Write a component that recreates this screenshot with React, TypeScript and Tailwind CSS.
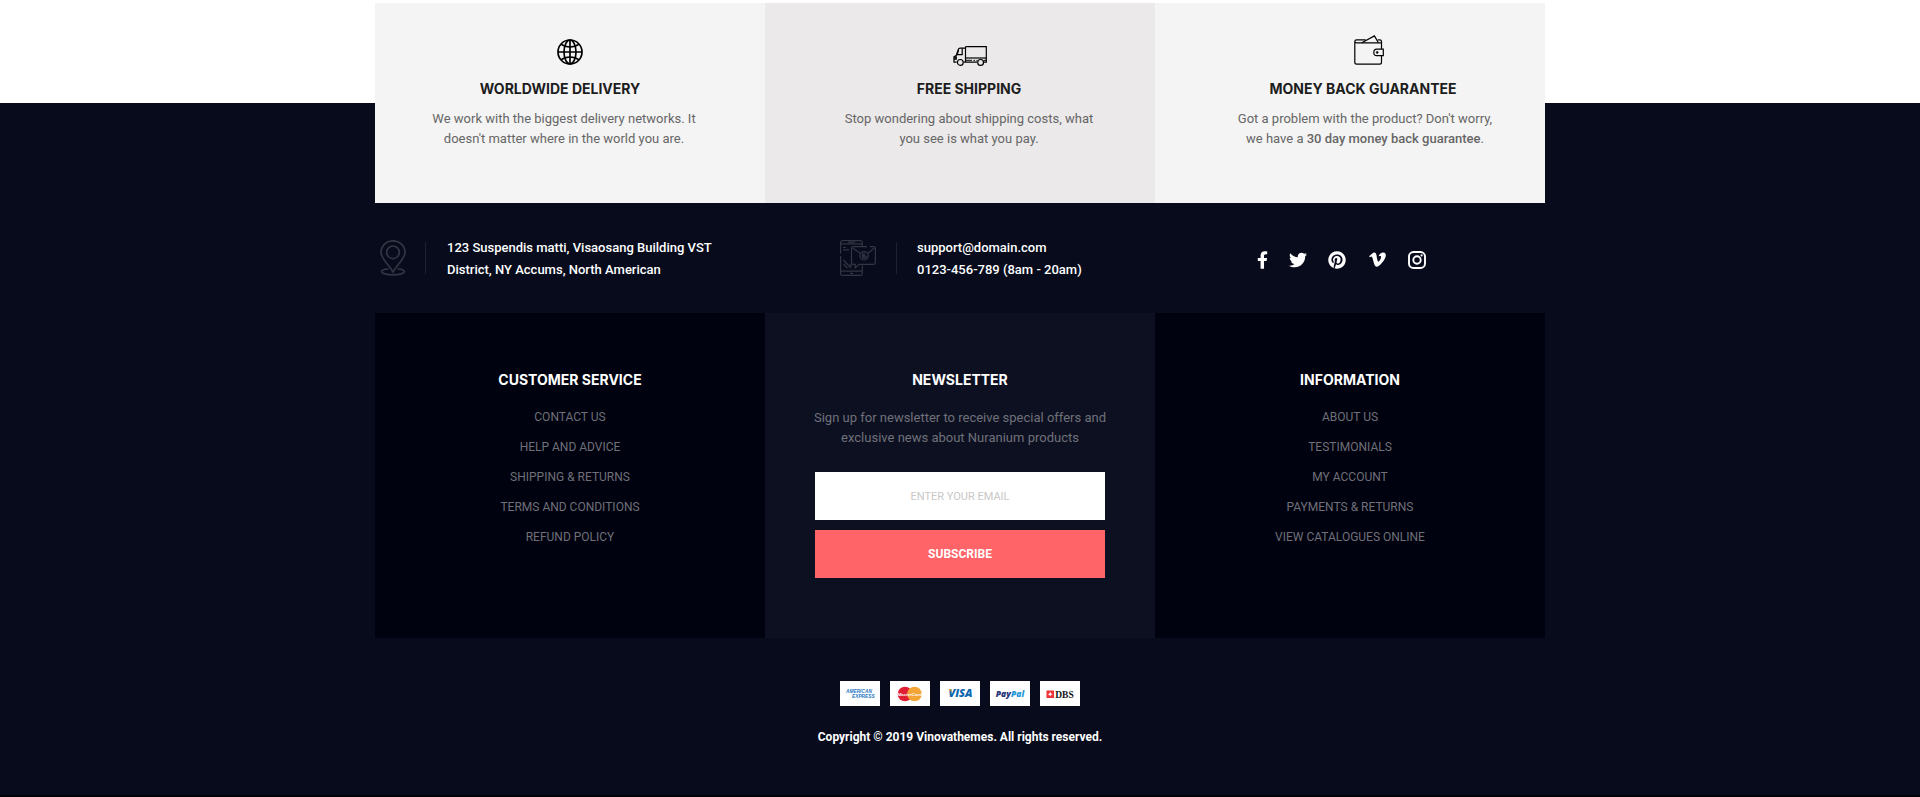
import React from "react";
import { FaFacebookF, FaTwitter, FaPinterest, FaVimeoV } from "react-icons/fa";

function GlobeIcon() {
  return (
    <svg width="26" height="26" viewBox="0 0 26 26" fill="none" stroke="#000" strokeWidth="1.7" aria-hidden="true">
      <circle cx="13" cy="13" r="12" />
      <ellipse cx="13" cy="13" rx="6" ry="12" />
      <path d="M13 1v24M1 13h24" />
      <path d="M4 5.2c2.6 2 5.6 2.8 9 2.8s6.400-.8 9-2.800M4 20.800c2.600-2 5.600-2.800 9-2.800s6.400.8 9 2.800" />
    </svg>
  );
}

function TruckIcon() {
  return (
    <svg width="34" height="20" viewBox="0 0 34 20" fill="none" stroke="#000" strokeWidth="1.2" aria-hidden="true">
      <path d="M12.500.7h20.800v15.500h-2.600M24 16.200H11M12.500.7v15.500" />
      <path d="M12.500 2.200H7.200c-1 0-1.700.4-2 1.400L3.400 9.300 1 10.800v5.400h2.600" />
      <path d="M9.200 2.200v6.500H4.200L5.600 4" />
      <path d="M12.500 12h20.800" />
      <path d="M.8 11h2.400v2H.8" strokeWidth="1.4" />
      <path d="M13 14.300h6M20.500 14.300h1.600M23.400 14.300h1.200M30.500 14.300h2.800" strokeWidth="1" />
      <circle cx="7.3" cy="16.4" r="2.9" />
      <circle cx="27.6" cy="16.4" r="2.9" />
    </svg>
  );
}

function WalletIcon() {
  return (
    <svg width="30" height="30" viewBox="0 0 30 30" fill="none" stroke="#000" strokeWidth="1.2" aria-hidden="true">
      <path d="M27.500 14V7.800H2.600C1.500 7.800.8 7 .8 6.300v21c0 1.100.7 1.900 1.900 1.900h22.900c1.200 0 1.900-.8 1.900-1.900V21" />
      <path d="M.8 6.600c0-1.100.8-1.700 1.900-1.700h9M23.800 4.900h1.800c1.200 0 1.900.6 1.900 1.700v1.200" />
      <path d="M7.800 7.800 20.400.9l4 6.900" />
      <path d="M29.300 14.200h-6.600a2.900 3.200 0 0 0 0 6.400h6.600z" />
      <circle cx="23.2" cy="17.4" r="1" fill="#000" strokeWidth=".6" />
    </svg>
  );
}

function PinIcon() {
  return (
    <svg width="26" height="36" viewBox="0 0 26 36" fill="none" stroke="#323542" strokeWidth="1.7" aria-hidden="true">
      <path d="M13 32C9.500 25.500 1 18.500 1 12.500a12 11.700 0 0 1 24 0c0 6-8.500 13-12 19.500z" />
      <circle cx="13" cy="12.300" r="6.300" />
      <path d="M8.300 28.800c-4 .4-6.700 1.400-6.700 2.700 0 1.900 5 3.300 11.400 3.300s11.400-1.400 11.400-3.300c0-1.300-2.700-2.300-6.700-2.700" />
    </svg>
  );
}

function PhoneMailIcon() {
  return (
    <svg width="36" height="36" viewBox="0 0 36 36" fill="none" stroke="#323542" strokeWidth="1.2" aria-hidden="true">
      <path d="M22.300 6V2.500c0-1.100-.7-1.900-1.800-1.900h-18C1.400.6.6 1.400.6 2.500v11.300M.6 16v17.500c0 1.100.8 1.900 1.900 1.900h18c1.100 0 1.800-.8 1.800-1.900V25.500" />
      <path d="M.6 3.800h21.700M.6 31.200h21.700M8 2.200h7M10 33.300h3M3 9.800h6M3 7.500h3M3.500 20l7.500 8M3.500 24l4 4M10 24l2 2" />
      <path d="M27 6.600H13.200c-1 0-1.700.8-1.700 1.700v14.300c0 1 .7 1.700 1.700 1.700h2v3.600l4-3.600h14.500c1 0 1.700-.7 1.700-1.700V8.300c0-.9-.7-1.700-1.700-1.700H30" />
      <path d="m12.500 8 8.300 5.500M34.500 8l-7 5.500" />
      <circle cx="24" cy="15.800" r="4.200" />
      <path d="M24 13v5.500M22.500 13.500v4.600M22.500 15.800h2.600a1.200 1.200 0 0 1 0 2.400h-2.600" />
    </svg>
  );
}

function InstagramIcon() {
  return (
    <svg width="18" height="18" viewBox="0 0 18 18" fill="none" stroke="currentColor" strokeWidth="1.9" aria-hidden="true">
      <rect x="1" y="1" width="16" height="16" rx="4.5" />
      <circle cx="9" cy="9" r="3.7" />
      <circle cx="13.6" cy="4.4" r="1.1" fill="currentColor" stroke="none" />
    </svg>
  );
}

const features = [
  {
    title: "WORLDWIDE DELIVERY",
    icon: <GlobeIcon />,
    lines: [<>We work with the biggest delivery networks. It</>, <>doesn't matter where in the world you are.</>],
    card: "bg-[#f4f4f4] pr-3",
    iconBox: "pb-px pl-3",
    titleBox: "pr-2",
  },
  {
    title: "FREE SHIPPING",
    icon: <TruckIcon />,
    lines: [<>Stop wondering about shipping costs, what</>, <>you see is what you pay.</>],
    card: "bg-[#ebe9ea] pl-[18px]",
    iconBox: "pl-[2px]",
    titleBox: "",
  },
  {
    title: "MONEY BACK GUARANTEE",
    icon: <WalletIcon />,
    lines: [
      <>Got a problem with the product? Don't worry,</>,
      <>
        we have a <span className="font-medium">30 day money back guarantee</span>.
      </>,
    ],
    card: "bg-[#f4f4f4] pl-[30px]",
    iconBox: "pb-px pl-2",
    titleBox: "pr-1",
  },
];

const socials = [
  { name: "Facebook", icon: <FaFacebookF size={18} />, box: "w-[11px]" },
  { name: "Twitter", icon: <FaTwitter size={18} />, box: "w-[18px]" },
  { name: "Pinterest", icon: <FaPinterest size={18} />, box: "w-[18px]" },
  { name: "Vimeo", icon: <FaVimeoV size={19} />, box: "w-[20px]" },
  { name: "Instagram", icon: <InstagramIcon />, box: "w-[18px]" },
];

const payments = [
  {
    name: "American Express",
    logo: (
      <g fill="#2a78c2" fontFamily="Liberation Sans, sans-serif" fontWeight="700" fontStyle="italic" fontSize="4.8">
        <text x="6" y="11.5">AMERICAN</text>
        <text x="12" y="17">EXPRESS</text>
      </g>
    ),
  },
  {
    name: "MasterCard",
    logo: (
      <g>
        <circle cx="15" cy="13" r="7.3" fill="#e01f35" />
        <circle cx="24.5" cy="13" r="7.3" fill="#f3a637" />
        <text x="19.8" y="15" textAnchor="middle" fill="#fff" fontFamily="Liberation Sans, sans-serif" fontWeight="700" fontSize="4.4">
          MasterCard
        </text>
      </g>
    ),
  },
  {
    name: "Visa",
    logo: (
      <g fontFamily="Open Sans, sans-serif" fontWeight="800" fontStyle="italic" fontSize="11">
        <text x="20.5" y="16" textAnchor="middle" fill="#0b66ad">VISA</text>
        <path d="M8 8h3l1.500 4.200C11.400 10 9.800 8.800 8 8z" fill="#f0a01e" />
      </g>
    ),
  },
  {
    name: "PayPal",
    logo: (
      <text x="20" y="15.5" textAnchor="middle" fontFamily="Open Sans, sans-serif" fontWeight="800" fontStyle="italic" fontSize="8.5">
        <tspan fill="#263577">Pay</tspan>
        <tspan fill="#2497d6">Pal</tspan>
      </text>
    ),
  },
  {
    name: "DBS",
    logo: (
      <g>
        <rect x="6.5" y="9.5" width="7.5" height="7.5" fill="#ee3338" />
        <path d="m10.200 10.800.8 1.600 1.600.8-1.600.8-.8 1.600-.8-1.600-1.600-.8 1.600-.8z" fill="#fff" />
        <text x="15.2" y="16.5" fill="#111" fontFamily="Liberation Serif, serif" fontWeight="700" fontSize="9.5">DBS</text>
      </g>
    ),
  },
];

function LinkColumn({ title, links }: { title: string; links: string[] }) {
  return (
    <nav aria-label={title} className="bg-[#00020f] pt-[55px] pb-20 text-center">
      <h3 className="font-[Inter,sans-serif] text-[14px] leading-6 font-bold text-white">{title}</h3>
      <ul className="mt-[10px] text-[12px] text-[#6f7079]">
        {links.map((link) => (
          <li key={link} className="leading-[30px]">
            <a href="#">{link}</a>
          </li>
        ))}
      </ul>
    </nav>
  );
}

export default function App() {
  return (
    <div className="min-h-screen bg-white font-[Roboto,sans-serif]">
      <section aria-label="Store benefits" className="relative mx-auto grid max-w-[1170px] grid-cols-3 pt-[3px]">
        {features.map((f) => (
          <article key={f.title} className={`h-[200px] pt-8 text-center ${f.card}`}>
            <div className={`flex h-[31px] items-end justify-center ${f.iconBox}`}>{f.icon}</div>
            <h2 className={`mt-[11px] font-[Inter,sans-serif] text-[14px] leading-6 font-bold text-[#1d1d1d] ${f.titleBox}`}>{f.title}</h2>
            <p className="mt-2 text-[13px] leading-5 text-[#666]">
              {f.lines[0]}
              <br />
              {f.lines[1]}
            </p>
          </article>
        ))}
      </section>

      <footer className="-mt-[100px] border-b-2 border-[#01020a] bg-[#070b1c] pt-[100px] pb-12">
        <div className="mx-auto max-w-[1170px]">
          <div className="grid h-[110px] grid-cols-[465fr_417fr_288fr] items-center">
            <address className="flex items-center pl-[5px] not-italic">
              <PinIcon />
              <span className="ml-[19px] h-8 w-px bg-[#1d2030]" />
              <p className="ml-[21px] pt-[2px] text-[13px] leading-[22px] font-medium text-white">
                123 Suspendis matti, Visaosang Building VST
                <br />
                District, NY Accums, North American
              </p>
            </address>
            <address className="flex items-center not-italic">
              <PhoneMailIcon />
              <span className="ml-5 h-8 w-px bg-[#1d2030]" />
              <p className="ml-5 pt-[2px] text-[13px] leading-[22px] font-medium text-white">
                <a href="mailto:support@domain.com">support@domain.com</a>
                <br />
                0123-456-789 (8am - 20am)
              </p>
            </address>
            <div className="flex items-center gap-[21px] pt-[3px] text-white">
              {socials.map((s) => (
                <a key={s.name} href="#" aria-label={s.name} className={`flex justify-center ${s.box}`}>
                  {s.icon}
                </a>
              ))}
            </div>
          </div>

          <div className="grid h-[325px] grid-cols-3">
            <LinkColumn
              title="CUSTOMER SERVICE"
              links={["CONTACT US", "HELP AND ADVICE", "SHIPPING & RETURNS", "TERMS AND CONDITIONS", "REFUND POLICY"]}
            />
            <section className="bg-[#0d1021] px-[50px] pt-[55px] text-center">
              <h3 className="font-[Inter,sans-serif] text-[14px] leading-6 font-bold text-white">NEWSLETTER</h3>
              <p className="mt-4 flex flex-col items-center text-[13px] leading-5 text-[#6f7079]">
                <span className="whitespace-nowrap">Sign up for newsletter to receive special offers and</span>
                <span className="whitespace-nowrap">exclusive news about Nuranium products</span>
              </p>
              <form className="mt-6 flex flex-col gap-[10px]" onSubmit={(e) => e.preventDefault()}>
                <input
                  type="email"
                  aria-label="Email"
                  placeholder="ENTER YOUR EMAIL"
                  className="h-12 bg-white text-center text-[11px] text-[#333] outline-none placeholder:text-[#c8c8c8]"
                />
                <button type="submit" className="h-12 bg-[#ff6468] text-[12px] font-bold text-white">
                  SUBSCRIBE
                </button>
              </form>
            </section>
            <LinkColumn
              title="INFORMATION"
              links={["ABOUT US", "TESTIMONIALS", "MY ACCOUNT", "PAYMENTS & RETURNS", "VIEW CATALOGUES ONLINE"]}
            />
          </div>

          <ul className="mt-[43px] flex justify-center gap-[10px]">
            {payments.map((p) => (
              <li key={p.name}>
                <svg width="40" height="25" viewBox="0 0 40 25" role="img" aria-label={p.name} className="block bg-white">
                  {p.logo}
                </svg>
              </li>
            ))}
          </ul>
          <p className="mt-[21px] text-center text-[12px] leading-5 font-bold text-white">
            Copyright © 2019 Vinovathemes. All rights reserved.
          </p>
        </div>
      </footer>
    </div>
  );
}
